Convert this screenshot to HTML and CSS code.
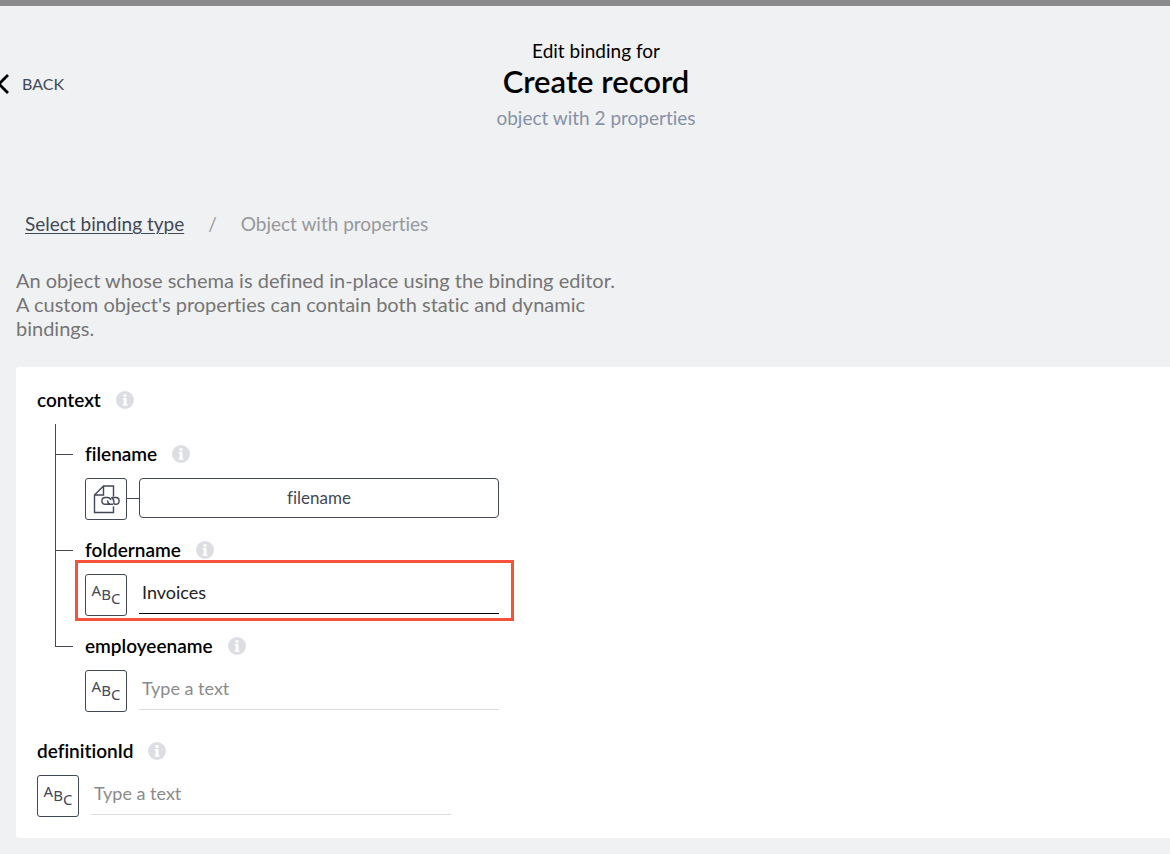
FILE: index.html
```html
<!DOCTYPE html>
<html lang="en">
<head>
<meta charset="utf-8">
<title>Edit binding for Create record</title>
<link rel="stylesheet" href="styles.css">
</head>
<body>
<svg class="sprite" aria-hidden="true">
  <symbol id="info" viewBox="0 0 18 18">
    <circle cx="9" cy="9" r="9" fill="#dcdee3"/>
    <path d="M7.500 3.300h3v2.500h-3zM6.800 7h3.700v6h.9v1.700H6.800V13h.9V8.700h-.9z" fill="#fff"/>
  </symbol>
</svg>

<header class="page-header">
  <button class="back" type="button">
    <svg class="back-icon" viewBox="0 0 13 20" aria-hidden="true"><path d="M12 1 3 10l9 9" fill="none" stroke="#000" stroke-width="2.8"/></svg>
    BACK
  </button>
  <div class="heading">
    <p class="eyebrow">Edit binding for</p>
    <h1 class="title">Create record</h1>
    <p class="subtitle">object with 2 properties</p>
  </div>
</header>

<main class="content">
  <nav class="breadcrumbs">
    <a class="crumb-link" href="#">Select binding type</a>
    <span>/</span>
    <span>Object with properties</span>
  </nav>
  <p class="description">An object whose schema is defined in-place using the binding editor.<br>A custom object's properties can contain both static and dynamic bindings.</p>

  <form class="panel">
    <section>
      <h2 class="label">context <svg class="info"><use href="#info"/></svg></h2>
      <ul class="tree">
        <li class="node">
          <div class="label"><label for="filename">filename</label> <svg class="info"><use href="#info"/></svg></div>
          <div class="field linked">
            <button class="type" type="button" aria-label="Linked value">
              <svg class="type-icon" viewBox="0 0 42 42" fill="none" stroke="#414857" stroke-width="1.4">
                <path d="M28.500 18.500V8H18.500L9.500 17v17.500h19V28.500M18.500 8v9h-9"/>
                <path d="M25 26.300h-4.700a3.400 3.400 0 0 1 0-6.800h2.200c1.700 0 2.900 1 3.400 2.600M29 23.800c-.5 1.500 0 2.500 1.200 2.500h.5a3.400 3.400 0 0 0 0-6.800h-4.200M22.500 22.300c.4 2.500 1.800 4 3.800 4h1.700M26.300 19.500c1.300.5 2.200 1.500 2.700 4.300"/>
              </svg>
            </button>
            <button class="binding" id="filename" type="button">filename</button>
          </div>
        </li>
        <li class="node">
          <div class="label"><label for="foldername">foldername</label> <svg class="info"><use href="#info"/></svg></div>
          <div class="field highlighted">
            <button class="type" type="button" aria-label="Text value"><span class="a">A</span><span class="b">B</span><span class="c">C</span></button>
            <input class="text filled" id="foldername" type="text" value="Invoices">
          </div>
        </li>
        <li class="node">
          <div class="label"><label for="employeename">employeename</label> <svg class="info"><use href="#info"/></svg></div>
          <div class="field">
            <button class="type" type="button" aria-label="Text value"><span class="a">A</span><span class="b">B</span><span class="c">C</span></button>
            <input class="text" id="employeename" type="text" placeholder="Type a text">
          </div>
        </li>
      </ul>
    </section>
    <section>
      <div class="label"><label for="definition">definitionId</label> <svg class="info"><use href="#info"/></svg></div>
      <div class="field">
        <button class="type" type="button" aria-label="Text value"><span class="a">A</span><span class="b">B</span><span class="c">C</span></button>
        <input class="text" id="definition" type="text" placeholder="Type a text">
      </div>
    </section>
  </form>
</main>
</body>
</html>
```
FILE: styles.css
```css
*, *::before, *::after { box-sizing: border-box; }

body {
  margin: 0;
  border-top: 6px solid #8a8a8c;
  background: #f0f1f3;
  color: #000;
  font: 19px/24px Lato, "Open Sans", sans-serif;
  font-variant-ligatures: none;
}

h1, h2, p, ul { margin: 0; padding: 0; font-weight: inherit; }
button, input { font: inherit; }

.sprite { display: none; }

.page-header {
  display: grid;
  grid-template-columns: 1fr auto 1fr;
  padding: 33px 0 82px;
}

.back {
  display: flex;
  align-items: center;
  justify-self: start;
  align-self: start;
  gap: 13px;
  margin: 33px 0 0 -4px;
  padding: 0;
  border: 0;
  background: none;
  color: #414857;
  font-size: 16px;
  line-height: 24px;
}
.back-icon { width: 13px; height: 20px; }

.heading { margin-left: 22px; text-align: center; }
.eyebrow { line-height: 24px; }
.title { font-size: 31px; line-height: 36px; font-weight: 600; }
.subtitle { margin: 7px 0 0; color: #8692a6; }

.content { padding: 0 0 16px 16px; }

.breadcrumbs {
  display: flex;
  gap: 24px;
  padding: 0 9px;
  color: #97989b;
}
.crumb-link { color: #414857; text-underline-offset: 2px; text-decoration-thickness: 1px; }

.description {
  max-width: 610px;
  margin: 32px 0 27px;
  font-size: 20px;
  color: #757575;
}

.panel {
  display: grid;
  gap: 27px;
  padding: 21px;
  border-radius: 3px 0 0 3px;
  background: #fff;
}

.label {
  display: flex;
  align-items: center;
  gap: 15px;
  margin-bottom: 12px;
  font-size: 19px;
  font-weight: 600;
}
.info { width: 18px; height: 18px; }

.tree { margin-left: 18px; list-style: none; }
.node { position: relative; padding: 18px 0 0 30px; }
.node::before {
  content: "";
  position: absolute;
  top: 0;
  left: 0;
  width: 18px;
  height: 31px;
  border: solid #414857;
  border-width: 0 0 1px 1px;
}
.node:not(:last-child)::after {
  content: "";
  position: absolute;
  top: 0;
  bottom: 0;
  left: 0;
  border-left: 1px solid #414857;
}

.field { position: relative; display: flex; gap: 12px; max-width: 414px; }
.linked::before {
  content: "";
  position: absolute;
  top: 20px;
  left: 42px;
  width: 12px;
  border-top: 1px solid #414857;
}
.highlighted::after {
  content: "";
  position: absolute;
  inset: -14px -15px -5px -10px;
  border: 3px solid #f4523a;
  pointer-events: none;
}

.type {
  display: flex;
  justify-content: center;
  align-items: center;
  flex: none;
  width: 42px;
  height: 42px;
  padding: 0;
  border: 1px solid #414857;
  border-radius: 3px;
  background: #fff;
  color: #414857;
  font: 15px/16px "Noto Sans", sans-serif;
}
.type-icon { flex: none; width: 42px; height: 42px; }
.a { padding-bottom: 10px; }
.b { padding-bottom: 2px; }
.c { padding-top: 6px; }

.binding {
  flex: 1;
  height: 40px;
  border: 1px solid #414857;
  border-radius: 4px;
  background: #fff;
  color: #414857;
  font-size: 17px;
}

.text {
  flex: 1;
  min-width: 0;
  height: 40px;
  padding: 0 3px 4px;
  border: 0;
  border-bottom: 1px solid #dcdcdc;
  outline: 0;
  background: none;
  color: #222;
  font-size: 18px;
}
.text.filled { border-color: #000; }
.text::placeholder { color: #8b8b8b; opacity: 1; }
```
